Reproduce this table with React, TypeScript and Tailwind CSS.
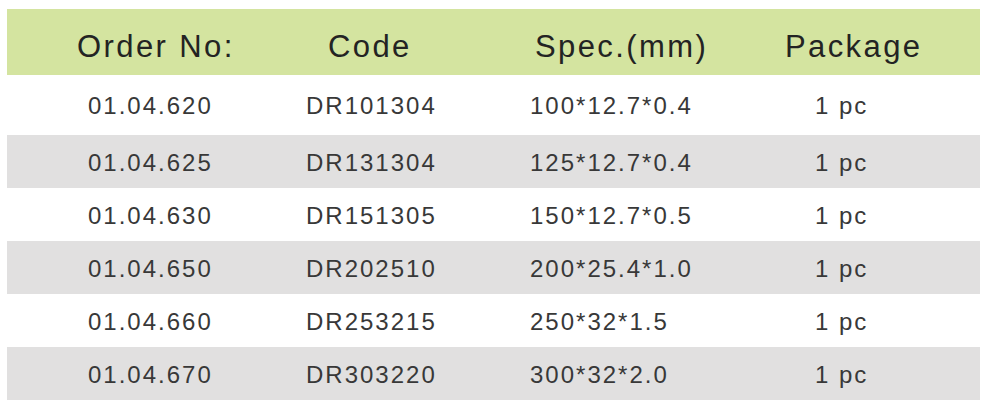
const rows = [
  { order: "01.04.620", code: "DR101304", spec: "100*12.7*0.4", pkg: "1 pc" },
  { order: "01.04.625", code: "DR131304", spec: "125*12.7*0.4", pkg: "1 pc" },
  { order: "01.04.630", code: "DR151305", spec: "150*12.7*0.5", pkg: "1 pc" },
  { order: "01.04.650", code: "DR202510", spec: "200*25.4*1.0", pkg: "1 pc" },
  { order: "01.04.660", code: "DR253215", spec: "250*32*1.5", pkg: "1 pc" },
  { order: "01.04.670", code: "DR303220", spec: "300*32*2.0", pkg: "1 pc" },
];

export default function App() {
  return (
    <div className="w-[987px] h-[407px] bg-white pt-[9px] px-[7px] font-['Liberation_Sans',Arial,sans-serif] whitespace-nowrap">
      {/* header */}
      <div className="grid grid-cols-[230px_220px_250px_1fr] h-[66px] items-center bg-[#d4e4a0] text-[31px] leading-none tracking-[2.4px] text-[#232323] pt-[9px]">
        <div className="pl-[70px]">Order No:</div>
        <div className="pl-[91px]">Code</div>
        <div className="pl-[78px]">Spec.(mm)</div>
        <div className="pl-[78px]">Package</div>
      </div>

      {/* body rows */}
      {rows.map((r, i) => (
        <div
          key={r.order}
          className={`grid grid-cols-[230px_220px_250px_1fr] items-center text-[24px] leading-none tracking-[2px] text-[#383838] ${
            i === 0 ? "h-[60px] pt-[2px]" : "h-[53px] pt-[3px]"
          } ${i % 2 === 1 ? "bg-[#e1e0e0]" : "bg-white"}`}
        >
          <div className="pl-[81px]">{r.order}</div>
          <div className="pl-[69px]">{r.code}</div>
          <div className="pl-[73px]">{r.spec}</div>
          <div className="pl-[108px]">{r.pkg}</div>
        </div>
      ))}
    </div>
  );
}
